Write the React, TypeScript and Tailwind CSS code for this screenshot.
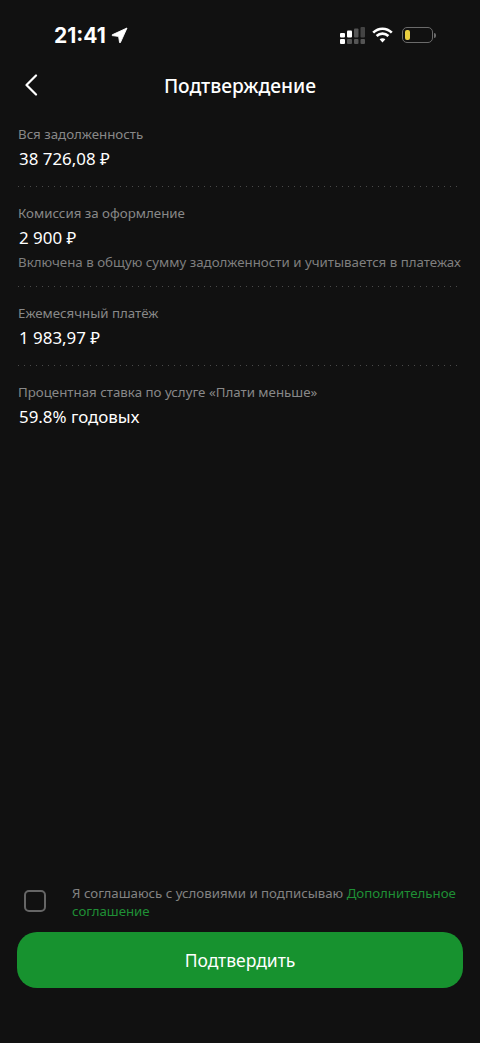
const font = "[font-family:'Noto_Sans','DejaVu_Sans',sans-serif]"

function StatusBar() {
  return (
    <div className="h-[60px] flex items-center justify-between pl-[54px] pr-[44px] pt-[10px] shrink-0">
      <div className="flex items-center gap-[5px]">
        <span className="text-white text-[21px] font-bold leading-none font-['Inter',sans-serif]">21:41</span>
        <svg width="17" height="17" viewBox="0 0 17 17">
          <path d="M16 1 L1.2 7.8 Q0.8 8.4 1.4 8.6 L7.6 9.4 L8.6 15.6 Q9 16.2 9.4 15.6 Z" fill="#fff" stroke="#fff" strokeWidth="0.9" strokeLinejoin="round" />
        </svg>
      </div>
      <div className="flex items-center">
        <svg width="25" height="17" viewBox="0 0 25 17" className="mr-[7px]">
          <rect x="0" y="6" width="5" height="4.5" rx="1" fill="#fff" />
          <rect x="7" y="3.5" width="5" height="7" rx="1" fill="#fff" />
          <rect x="14" y="1.5" width="4.5" height="9" rx="1" fill="#555" />
          <rect x="20.5" y="0" width="4.5" height="10.5" rx="1" fill="#444" />
          <rect x="0" y="12" width="5" height="5" rx="1" fill="#fff" />
          <rect x="7" y="12" width="5" height="5" rx="1" fill="#555" />
          <rect x="14" y="12" width="4.5" height="5" rx="1" fill="#555" />
          <rect x="20.5" y="12" width="4.5" height="5" rx="1" fill="#555" />
        </svg>
        <svg width="21" height="16" viewBox="0 0 21 16" className="mr-[9px]" fill="none" stroke="#fff" strokeWidth="2.6">
          <path d="M1.2 5.6 C6.5 0.4 14.5 0.4 19.8 5.6" />
          <path d="M4.6 9 C8 5.8 13 5.8 16.4 9" />
          <path d="M10.5 15.5 L7.6 12.3 C9.2 11 11.8 11 13.4 12.3 Z" fill="#fff" stroke="none" />
        </svg>
        <div className="w-[31px] h-[16px] rounded-[5px] border border-[#6b6b6b] p-[2px] flex">
          <div className="w-[5px] h-full rounded-[2px] bg-[#e9cf3f]" />
        </div>
        <div className="w-[2px] h-[5px] ml-[1px] rounded-r-sm bg-[#6b6b6b]" />
      </div>
    </div>
  )
}

function Dots() {
  return <div className="h-[1px] mt-[14.5px] mb-[16px] mr-[1px] bg-[linear-gradient(to_right,#4a4a4a_1px,transparent_1px)] bg-[length:6px_1px]" />
}

function Item({ label, value, note, last }: { label: string; value: string; note?: string; last?: boolean }) {
  return (
    <div>
      <div className="text-[#888888] text-[13.3px] leading-[20px]">{label}</div>
      <div className="text-white text-[16.9px] leading-[24px] mt-[3px] ml-[1px]">{value}</div>
      {note && <div className="text-[#7f7f7f] text-[13.3px] leading-[20px] mt-[2px] whitespace-nowrap">{note}</div>}
      {!last && <Dots />}
    </div>
  )
}

export default function App() {
  return (
    <div className={`h-[1043px] w-[480px] overflow-hidden bg-[#111111] flex flex-col ${font}`}>
      <StatusBar />
      <div className="relative h-[52px] flex items-center justify-center shrink-0">
        <svg width="14" height="22" viewBox="0 0 14 22" fill="none" stroke="#fff" strokeWidth="2.2" strokeLinecap="round" strokeLinejoin="round" className="absolute left-[24px] top-[14px]">
          <path d="M12 1.5 L2.5 11 L12 20.5" />
        </svg>
        <span className="text-white text-[19.2px] font-medium leading-none">Подтверждение</span>
      </div>
      <div className="flex-1 px-[18px] pt-[12px]">
        <Item label="Вся задолженность" value="38 726,08 ₽" />
        <Item
          label="Комиссия за оформление"
          value="2 900 ₽"
          note="Включена в общую сумму задолженности и учитывается в платежах"
        />
        <Item label="Ежемесячный платёж" value="1 983,97 ₽" />
        <Item label="Процентная ставка по услуге «Плати меньше»" value="59.8% годовых" last />
      </div>
      <div className="flex items-start pl-[24px] pr-[18px] mb-[12px]">
        <div className="w-[22px] h-[22px] mt-[6px] rounded-[5px] border-2 border-[#666666] shrink-0" />
        <p className="ml-[26px] text-[13.25px] leading-[18px] text-[#828282]">
          Я соглашаюсь с условиями и подписываю <span className="text-[#1f8f35]">Дополнительное соглашение</span>
        </p>
      </div>
      <button className="mx-[17px] mb-[55px] h-[56px] rounded-[20px] bg-[#17922f] text-white text-[17.5px] font-normal shrink-0">
        Подтвердить
      </button>
    </div>
  )
}
